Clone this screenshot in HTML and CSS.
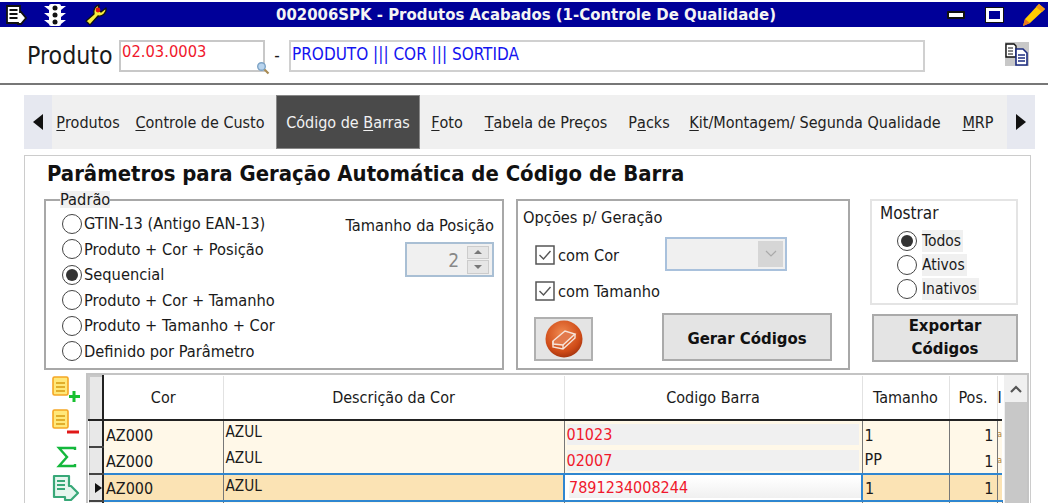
FILE: index.html
```html
<!DOCTYPE html>
<html lang="pt">
<head>
<meta charset="utf-8">
<title>Produtos Acabados</title>
<link rel="stylesheet" href="styles.css">
</head>
<body>
<header class="titlebar">
  <div class="tb-left">
    <svg class="tb-i1" width="22" height="22" viewBox="0 0 22 22"><path d="M2 2h13v6h1l5 6-5 6h-3v-1H2z" fill="#fff" stroke="#111" stroke-width="1.800"/><path d="M4.500 6h8M4.500 10h8M4.500 14h8" stroke="#111" stroke-width="1.800"/></svg>
    <svg class="tb-i2" width="24" height="24" viewBox="0 0 24 24"><rect x="6" y="1" width="12" height="22" rx="2" fill="#fff"/><path d="M1 3h5v4zM23 3h-5v4zM1 10h5v4zM23 10h-5v4zM1 17h5v4zM23 17h-5v4z" fill="#fff"/><circle cx="12" cy="5" r="2.500" fill="#111"/><circle cx="12" cy="12" r="2.500" fill="#111"/><circle cx="12" cy="19" r="2.500" fill="#111"/></svg>
    <svg class="tb-i3" width="24" height="24" viewBox="0 0 24 24"><path d="M2 18l8-7c-1-4 1-8 5-9l-1 5 3 2 5-4c1 5-4 9-8 8l-8 9z" fill="#f8ec3c" stroke="#111" stroke-width="1.300" stroke-linejoin="round"/><circle cx="14" cy="7" r="2.400" fill="#e01010"/></svg>
  </div>
  <div class="tb-title">002006SPK - Produtos Acabados (1-Controle De Qualidade)</div>
  <div class="tb-right">
    <span class="tb-min"></span>
    <span class="tb-max"></span>
    <svg width="26" height="26" viewBox="0 0 26 26"><path d="M3 24l2-7L19 2l6 5L10 21z" fill="#fc0"/><path d="M19 2l6 5-3 3-6-5z" fill="#f39a14"/><path d="M3 24l2-7 5 4z" fill="#e8791e"/></svg>
  </div>
</header>

<section class="product">
  <span class="product-label">Produto</span>
  <div class="code-box">02.03.0003
    <svg class="lens" width="14" height="14" viewBox="0 0 14 14"><circle cx="5.500" cy="5.500" r="3.800" fill="#b8d4ee" stroke="#7ea4c6" stroke-width="1.400"/><path d="M8.500 8.500l4 4" stroke="#a78a52" stroke-width="2.200"/></svg>
  </div>
  <span class="dash">-</span>
  <div class="name-box">PRODUTO ||| COR ||| SORTIDA</div>
  <svg class="copy" width="24" height="24" viewBox="0 0 24 24"><rect width="24" height="24" fill="#c8c8c8"/><path d="M1 2h8l2 2v11H1z" fill="#fff" stroke="#111" stroke-width="1.400"/><path d="M3 6h5M3 9h5M3 12h5" stroke="#111"/><path d="M11 7h7l4 4v12H11z" fill="#fff" stroke="#1c2c80" stroke-width="1.600"/><path d="M13 13h7M13 16h7M13 19h7" stroke="#1c2c80" stroke-width="1.300"/></svg>
</section>

<nav class="tabs">
  <span class="tab-arrow"><i class="tri-left"></i></span>
  <div class="tab-list">
    <span class="tab tab-a"><u>P</u>rodutos</span>
    <span class="tab tab-b"><u>C</u>ontrole de Custo</span>
    <span class="tab tab-c active">Código de <u>B</u>arras</span>
    <span class="tab tab-d"><u>F</u>oto</span>
    <span class="tab tab-e"><u>T</u>abela de Preços</span>
    <span class="tab tab-f">P<u>a</u>cks</span>
    <span class="tab tab-g"><u>K</u>it/Montagem/ Segunda Qualidade</span>
    <span class="tab tab-h"><u>M</u>RP</span>
  </div>
  <span class="tab-arrow"><i class="tri-right"></i></span>
</nav>

<main class="panel">
  <h1 class="panel-title">Parâmetros para Geração Automática de Código de Barra</h1>
  <div class="groups">
    <fieldset class="group padrao">
      <legend>Padrão</legend>
      <div class="radios">
        <label class="radio"><i class="dot"></i>GTIN-13 (Antigo EAN-13)</label>
        <label class="radio"><i class="dot"></i>Produto + Cor + Posição</label>
        <label class="radio"><i class="dot on"></i>Sequencial</label>
        <label class="radio"><i class="dot"></i>Produto + Cor + Tamanho</label>
        <label class="radio"><i class="dot"></i>Produto + Tamanho + Cor</label>
        <label class="radio"><i class="dot"></i>Definido por Parâmetro</label>
      </div>
      <div class="pos">
        <span>Tamanho da Posição</span>
        <div class="spin">
          <span class="spin-val">2</span>
          <span class="spin-btns"><b><i class="up"></i></b><b><i class="down"></i></b></span>
        </div>
      </div>
    </fieldset>

    <div class="group opcoes">
      <div class="op-title">Opções p/ Geração</div>
      <div class="op-row op-cor">
        <label class="check"><svg width="20" height="20" viewBox="0 0 20 20"><rect x="1" y="1" width="18" height="18" fill="#fff" stroke="#555" stroke-width="1.500"/><path d="M4.500 10l4 4 7-8" fill="none" stroke="#555" stroke-width="1.400"/></svg>com Cor</label>
        <div class="combo"><span class="combo-btn"><svg width="14" height="8" viewBox="0 0 14 8"><path d="M2 1l5 5 5-5" fill="none" stroke="#aaa" stroke-width="1.200"/></svg></span></div>
      </div>
      <div class="op-row op-tam">
        <label class="check"><svg width="20" height="20" viewBox="0 0 20 20"><rect x="1" y="1" width="18" height="18" fill="#fff" stroke="#555" stroke-width="1.500"/><path d="M4.500 10l4 4 7-8" fill="none" stroke="#555" stroke-width="1.400"/></svg>com Tamanho</label>
      </div>
      <div class="op-actions">
        <button class="btn-eraser" type="button" aria-label="Limpar">
          <svg width="38" height="38" viewBox="0 0 38 38"><defs><radialGradient id="er" cx="45%" cy="35%" r="70%"><stop offset="0" stop-color="#f08a50"/><stop offset="0.700" stop-color="#d04c18"/><stop offset="1" stop-color="#9c2f0c"/></radialGradient></defs><circle cx="19" cy="19" r="18.500" fill="url(#er)"/><path d="M8 21l12-10 10 3-12 11-10-1z" fill="#e27a4c" stroke="#f6e4da" stroke-width="1.400"/><path d="M8 21v6l10 2 12-11v-4M18 25v4" fill="none" stroke="#f6e4da" stroke-width="1.400"/></svg>
        </button>
        <button class="btn btn-gerar" type="button">Gerar Códigos</button>
      </div>
    </div>

    <div class="side">
      <div class="mostrar">
        <div class="mostrar-title">Mostrar</div>
        <label class="mini"><i class="dot on"></i><span>Todos</span></label>
        <label class="mini"><i class="dot"></i><span>Ativos</span></label>
        <label class="mini"><i class="dot"></i><span>Inativos</span></label>
      </div>
      <button class="btn btn-export" type="button"><span class="export-text">Exportar<br>Códigos</span></button>
    </div>
  </div>

  <div class="lower">
    <div class="side-icons">
      <svg width="28" height="28" viewBox="0 0 28 28"><rect x="1" y="1" width="15" height="18" rx="1.500" fill="#ffe87a" stroke="#f5a623" stroke-width="1.600"/><path d="M4 7h9M4 11h9M4 15h9" stroke="#d89a10" stroke-width="1.500"/><path d="M22 15v11M17 20.500h11" stroke="#18c030" stroke-width="3"/></svg>
      <svg width="28" height="26" viewBox="0 0 28 26"><rect x="1" y="1" width="15" height="18" rx="1.500" fill="#ffe87a" stroke="#f5a623" stroke-width="1.600"/><path d="M4 7h9M4 11h9M4 15h9" stroke="#d89a10" stroke-width="1.500"/><path d="M15 23h12" stroke="#e01818" stroke-width="3"/></svg>
      <svg class="sigma" width="24" height="24" viewBox="0 0 24 24"><path d="M20 5V3H4l8 9-8 9h16v-2" fill="none" stroke="#14b83c" stroke-width="2.400"/></svg>
      <svg width="28" height="28" viewBox="0 0 28 28"><path d="M2 2h15v10h2l7 7-7 7H13v-3H2z" fill="#e6f6ee" stroke="#38a878" stroke-width="2.200" stroke-linejoin="round"/><path d="M5 7h8M5 11h8M5 15h8" stroke="#38a878" stroke-width="2"/></svg>
    </div>
    <div class="grid-box">
      <table class="grid">
        <colgroup><col class="c0"><col class="c1"><col class="c2"><col class="c3"><col class="c4"><col class="c5"><col class="c6"></colgroup>
        <thead>
          <tr><th class="ind"></th><th>Cor</th><th>Descrição da Cor</th><th>Codigo Barra</th><th>Tamanho</th><th>Pos.</th><th class="clip">I</th></tr>
        </thead>
        <tbody>
          <tr><td class="ind"></td><td>AZ000</td><td class="desc">AZUL</td><td class="code"><span>01023</span></td><td>1</td><td class="num">1</td><td class="clip">a</td></tr>
          <tr><td class="ind"></td><td>AZ000</td><td class="desc">AZUL</td><td class="code"><span>02007</span></td><td class="pp">PP</td><td class="num">1</td><td class="clip">a</td></tr>
          <tr class="sel"><td class="ind"><i class="row-mark"></i></td><td>AZ000</td><td class="desc">AZUL</td><td class="code edit"><span>7891234008244</span></td><td>1</td><td class="num">1</td><td class="clip"></td></tr>
          <tr class="next"><td class="ind"></td><td></td><td></td><td></td><td></td><td></td><td></td></tr>
        </tbody>
      </table>
      <div class="scroll">
        <span class="scroll-up"><svg width="14" height="9" viewBox="0 0 14 9"><path d="M2 7l5-5 5 5" fill="none" stroke="#555" stroke-width="2.200"/></svg></span>
        <span class="scroll-thumb"></span>
      </div>
    </div>
  </div>
</main>
</body>
</html>
```
FILE: styles.css
```css
* { box-sizing: border-box; }
html, body { margin: 0; height: 503px; overflow: hidden; background: #fff; }
body { width: 1048px; font-family: "DejaVu Sans Condensed", "DejaVu Sans", sans-serif; font-stretch: condensed; font-size: 16.3px; color: #1a1a1a; padding-top: 2px; }
i { display: block; }

.titlebar { height: 25px; background: #000099; display: flex; align-items: center; position: relative; color: #f4f4f4; }
.tb-left { display: flex; align-items: center; padding-left: 5px; }
.tb-i1 { margin-right: 16px; }
.tb-i2 { margin-right: 17px; }
.tb-title { position: absolute; left: 276px; top: 0; line-height: 25px; font-weight: 700; font-size: 16.6px; white-space: nowrap; }
.tb-right { margin-left: auto; display: flex; align-items: center; padding-right: 2px; }
.tb-min { width: 18px; height: 8px; background: #fff; border: 2px solid #111; border-radius: 1px; margin-right: 21px; }
.tb-max { width: 17px; height: 14px; background: #000099; border: 3px solid #fff; outline: 1px solid #111; margin-right: 17px; }

.product { height: 58px; display: flex; align-items: center; padding: 0 19px 0 27px; border-bottom: 2px solid #777; }
.product-label { font-size: 24.7px; width: 92px; margin-top: 1px; }
.code-box { position: relative; width: 146px; height: 32px; border: 2px solid #c8c8c8; color: #f0182c; font-size: 16.4px; padding: 0 0 0 1px; line-height: 20px; margin-top: 1px; }
.lens { position: absolute; right: -7px; bottom: -5px; }
.dash { width: 24px; text-align: center; font-size: 17px; }
.name-box { width: 636px; height: 32px; border: 2px solid #d0d0d0; color: #1414f0; font-size: 17px; line-height: 24px; padding-left: 1px; margin-top: 1px; }
.copy { margin-left: auto; margin-top: -2px; }

.tabs { display: flex; height: 54px; margin: 10px 13px 0 24px; background: #f0f0f0; }
.tab-arrow { width: 28px; background: #e6e8f0; display: flex; align-items: center; justify-content: center; flex: none; }
.tri-left { border: 8px solid transparent; border-left-width: 0; border-right: 10px solid #111; }
.tri-right { border: 8px solid transparent; border-right-width: 0; border-left: 10px solid #111; }
.tab-list { flex: 1; display: flex; }
.tab { display: flex; align-items: center; justify-content: center; white-space: pre; font-size: 16px; color: #222; padding-top: 1px; }
.tab u { text-underline-offset: 2px; }
.tab-a { width: 72px; }
.tab-b { width: 152px; }
.tab-c { width: 144px; }
.tab-d { width: 54px; }
.tab-e { width: 144px; }
.tab-f { width: 62px; }
.tab-g { width: 270px; }
.tab-h { width: 56px; }
.active { background: #4a4a4a; color: #f2f2f2; border: 1px solid #888; }

.panel { margin: 6px 17px 0 24px; height: 348px; border: 1px solid #ccc; border-bottom: 0; padding: 6px 0 0 19px; }
.panel-title { margin: 0 0 0 3px; font-size: 21.9px; line-height: 24px; font-weight: 700; color: #111; white-space: nowrap; }

.groups { display: flex; align-items: flex-start; margin-top: 13px; }
.group { border: 2px solid #a8a8a8; }
.padrao { width: 460px; height: 179px; margin: -8px 0 0; padding: 0 8px 0 16px; display: flex; min-inline-size: 0; }
.padrao legend { padding: 0; margin-left: -2px; line-height: 17px; background: #f0f0f0; }
.radios { display: flex; flex-direction: column; width: 284px; margin-top: 3px; }
.radio { height: 25.5px; display: flex; align-items: center; white-space: pre; }
.dot { width: 20px; height: 20px; border-radius: 50%; border: 1.5px solid #444; background: #fff; margin-right: 2px; flex: none; position: relative; }
.dot.on::after { content: ""; position: absolute; inset: 3px; border-radius: 50%; background: #333; }
.pos { flex: 1; display: flex; flex-direction: column; align-items: flex-end; padding-top: 8px; white-space: nowrap; }
.spin { width: 89px; height: 35px; margin-top: 7px; border: 2px solid #a9bfd4; background: #f0f0f0; display: flex; align-items: center; justify-content: flex-end; }
.spin-val { font-size: 19px; color: #888; margin-right: 8px; }
.spin-btns { width: 22px; height: 28px; display: flex; flex-direction: column; gap: 1px; margin-right: 3px; }
.spin-btns b { flex: 1; background: #e6e6e6; border: 1px solid #ccc; display: flex; align-items: center; justify-content: center; }
.up { border: 4px solid transparent; border-top: 0; border-bottom: 4px solid #777; }
.down { border: 4px solid transparent; border-bottom: 0; border-top: 4px solid #777; }

.opcoes { width: 334px; height: 171px; margin-left: 12px; padding: 7px 16px 0 5px; }
.op-title { line-height: 20px; }
.op-row { display: flex; align-items: center; padding-left: 12px; }
.op-cor { margin-top: 8px; height: 36px; }
.op-tam { height: 36px; }
.check { display: flex; align-items: center; gap: 3px; width: 130px; white-space: nowrap; margin-top: 2px; }
.check svg { flex: none; }
.combo { width: 122px; height: 34px; border: 2px solid #a9c1dc; background: #f0f0f0; display: flex; justify-content: flex-end; padding: 2px; }
.combo-btn { width: 25px; background: #d6d6d6; display: flex; align-items: center; justify-content: center; }
.op-actions { display: flex; align-items: center; justify-content: space-between; margin-top: 5px; padding-left: 11px; }
.btn-eraser { width: 59px; height: 44px; padding: 0; margin-top: 4px; border: 2px solid #b0b0b0; background: #e4e4e4; display: flex; align-items: center; justify-content: center; }
.btn { width: 170px; height: 48px; border: 2px solid #aaa; background: #e4e4e4; font-family: inherit; font-stretch: inherit; font-weight: 700; font-size: 16.6px; line-height: 23px; color: #111; padding: 0; }
.btn-gerar { padding-top: 3px; }

.side { width: 148px; margin-left: 20px; display: flex; flex-direction: column; }
.mostrar { height: 106px; border: 2px solid #e4e4e4; padding: 2px 0 0 8px; }
.mostrar-title { font-size: 17px; line-height: 20px; margin-bottom: 6px; }
.mini { display: flex; align-items: center; height: 24px; padding-left: 17px; font-size: 15.5px; }
.mini .dot { margin-right: 5px; }
.mini span { background: #f0f0f0; padding: 0 2px 0 0; line-height: 22px; }
.btn-export { width: 146px; margin: 9px 0 0 2px; }
.export-text { display: block; margin-top: -3px; }

.lower { display: flex; margin: 3px 0 0 6px; align-items: flex-start; }
.side-icons { width: 36px; display: flex; flex-direction: column; align-items: flex-start; padding-top: 3px; gap: 5px; }
.side-icons svg { flex: none; margin-left: 2px; }
.side-icons .sigma { margin-left: 5px; margin-top: 5px; }
.grid-box { width: 943px; height: 132px; border: 2px solid #c4c4c4; border-bottom: 0; display: flex; overflow: hidden; }
.grid { width: 913px; table-layout: fixed; border-collapse: collapse; flex: none; font-size: 16px; }
.c0 { width: 14px; }
.c1 { width: 120px; }
.c2 { width: 341px; }
.c3 { width: 298px; }
.c4 { width: 87px; }
.c5 { width: 48px; }
.c6 { width: 5px; }
.grid th { height: 44px; font-weight: 400; font-size: 16px; border-right: 1px solid #e2e2e2; border-bottom: 2px solid #222; padding: 0; white-space: nowrap; overflow: hidden; }
.grid th.ind { background: #e8e8e8; border: 2px solid #c8c8c8; border-bottom: 2px solid #222; border-right: 2px solid #222; }
.grid td { height: 27px; padding: 2px 0 0 2px; background: #fff8e8; border-right: 1px solid #777; border-bottom: 0; white-space: nowrap; overflow: hidden; color: #1a1a1a; }
.grid td.ind { background: #e8e8e8; border: 1px solid #ccc; border-right: 2px solid #222; border-bottom: 2px solid #444; padding: 0; }
.grid td.desc { vertical-align: top; padding-top: 1px; line-height: 20px; font-size: 15.2px; }
.grid td.code { padding: 2px 3px 2px 2px; color: #f0182c; }
.code span { display: block; background: #f0f0f0; line-height: 21px; }
.grid td.pp { vertical-align: top; padding-top: 2px; line-height: 22px; }
.grid td.num { text-align: right; padding-right: 3px; }
.grid th.clip { text-align: left; border-right: 0; }
.grid td.clip { padding: 0; border-right: 0; font-size: 8px; color: #b08030; }
.grid .sel td { background: #fbe3b4; border-top: 2px solid #2f86d0; border-bottom: 2px solid #2f86d0; }
.grid .sel td.ind { background: #e8e8e8; border-top: 1px solid #ccc; border-bottom: 2px solid #444; }
.grid .sel td.desc { padding-top: 1px; }
.grid .sel td.edit { background: #fff; border: 2px solid #2f86d0; padding: 0 0 0 4px; }
.edit span { background: linear-gradient(#fff, #f0f0f0); padding: 0; }
.row-mark { border: 5px solid transparent; border-right: 0; border-left: 7px solid #111; margin-left: 5px; }
.scroll { width: 25px; margin-left: 1px; display: flex; flex-direction: column; padding-top: 2px; flex: none; background: #f0f0f0; }
.scroll-up { height: 25px; display: flex; align-items: center; justify-content: center; }
.scroll-thumb { flex: 1; background: #c8c8c8; margin: 0 1px; }
```
